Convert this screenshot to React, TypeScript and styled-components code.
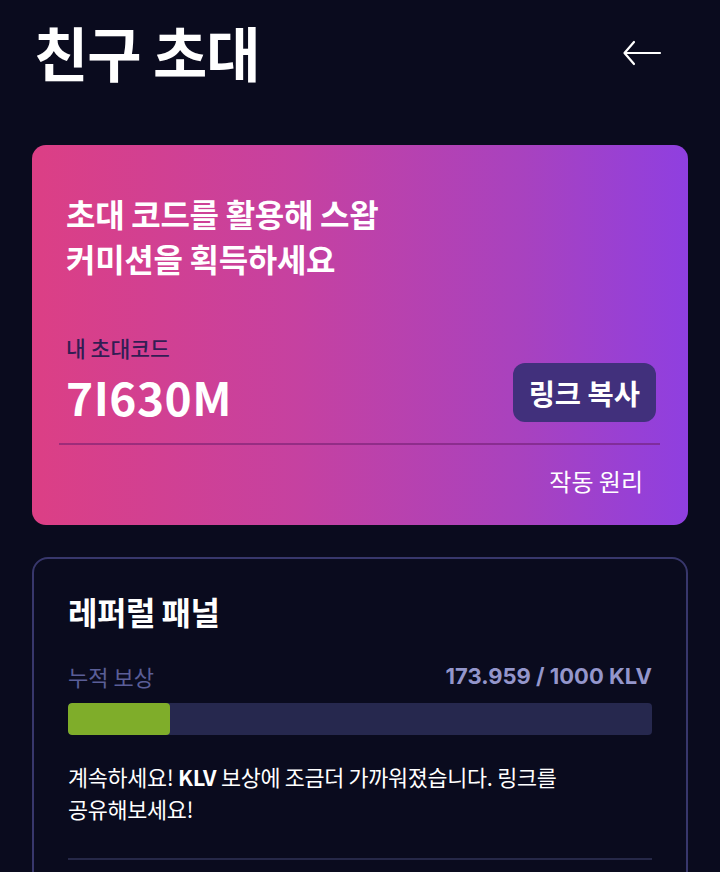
import React from "react";
import styled, { createGlobalStyle } from "styled-components";

const GlobalStyle = createGlobalStyle`
  html, body {
    margin: 0;
    padding: 0;
    background: #0a0b1e;
  }
  body {
    font-family: "Noto Sans CJK KR", "Noto Sans", sans-serif;
    color: #ffffff;
  }
  * { box-sizing: border-box; }
`;

const Page = styled.div`
  width: 720px;
  min-height: 872px;
  padding: 11px 32px 0;
  background: #0a0b1e;
  overflow: hidden;
`;

const Header = styled.header`
  display: flex;
  align-items: center;
  justify-content: space-between;
  height: 80px;
  padding-left: 2px;
  margin-bottom: 54px;
`;

const Title = styled.h1`
  margin: 0;
  font-size: 59px;
  font-weight: 700;
  letter-spacing: -1px;
  line-height: 1;
`;

const BackButton = styled.button`
  background: none;
  border: none;
  padding: 0;
  margin-right: 26px;
  margin-top: 4px;
  width: 40px;
  height: 30px;
  display: flex;
  align-items: center;
  justify-content: center;
  color: #ffffff;
  cursor: pointer;
`;

const InviteCard = styled.section`
  border-radius: 14px;
  background: linear-gradient(90deg, #dc3f85 0%, #c641a0 40%, #a842bf 75%, #8f3fe0 100%);
  padding: 46px 28px 28px 34px;
  margin-bottom: 32px;
`;

const Headline = styled.p`
  margin: 0 0 53px;
  font-size: 32px;
  font-weight: 700;
  line-height: 45px;
  letter-spacing: -0.3px;
`;

const CodeRow = styled.div`
  display: flex;
  align-items: flex-end;
  justify-content: space-between;
  padding-right: 4px;
  padding-bottom: 19px;
`;

const CodeBlock = styled.div`
  display: flex;
  flex-direction: column;
`;

const CodeLabel = styled.span`
  font-size: 21.5px;
  font-weight: 500;
  color: rgba(34, 26, 78, 0.92);
  line-height: 28px;
`;

const CodeValue = styled.span`
  font-size: 46px;
  font-weight: 700;
  line-height: 56px;
  margin-top: 6px;
  letter-spacing: 0.5px;
`;

const CopyButton = styled.button`
  background: #41307c;
  border: none;
  border-radius: 12px;
  height: 59px;
  padding: 0 16px;
  color: #ffffff;
  font-family: inherit;
  font-size: 28.5px;
  font-weight: 700;
  margin-bottom: 2px;
  cursor: pointer;
`;

const CardDivider = styled.hr`
  margin: 0 0 0 -7px;
  border: none;
  height: 2px;
  background: rgba(110, 30, 110, 0.55);
`;

const HowItWorks = styled.div`
  display: flex;
  justify-content: flex-end;
  padding: 20px 17px 0 0;
  font-size: 24px;
  line-height: 32px;
`;

const PanelCard = styled.section`
  border: 2px solid #38376c;
  border-radius: 16px;
  padding: 30px 34px 0 34px;
  min-height: 340px;
`;

const PanelTitle = styled.h2`
  margin: 0 0 29px;
  font-size: 32px;
  font-weight: 700;
  line-height: 44px;
  letter-spacing: -0.5px;
`;

const StatRow = styled.div`
  display: flex;
  justify-content: space-between;
  align-items: center;
  margin-bottom: 13px;
`;

const StatLabel = styled.span`
  font-size: 22px;
  color: #5a5e98;
  line-height: 28px;
`;

const StatValue = styled.span`
  font-family: "Inter", "Lato", sans-serif;
  font-size: 22px;
  font-weight: 700;
  color: #9496cb;
  letter-spacing: 0;
`;

const ProgressTrack = styled.div`
  height: 32px;
  border-radius: 4px;
  background: #26284e;
  overflow: hidden;
  margin-bottom: 26px;
`;

const ProgressFill = styled.div`
  height: 100%;
  background: #7fad2a;
  border-radius: 4px;
`;

const Message = styled.p`
  margin: 0 0 33px;
  font-size: 21.8px;
  line-height: 32px;
  letter-spacing: -0.3px;
  b { font-weight: 700; }
`;

const PanelDivider = styled.hr`
  margin: 0;
  border: none;
  height: 2px;
  background: #262848;
`;

export default function App() {
  const earned = 173.959;
  const goal = 1000;
  const pct = (earned / goal) * 100;
  return (
    <>
      <GlobalStyle />
      <Page>
        <Header>
          <Title>친구 초대</Title>
          <BackButton aria-label="back">
            <svg width="40" height="26" viewBox="0 0 40 26" fill="none">
              <path d="M38 13H3M12 2L2.5 13L12 24" stroke="#fff" strokeWidth="2.2" strokeLinecap="round" strokeLinejoin="round" />
            </svg>
          </BackButton>
        </Header>

        <InviteCard>
          <Headline>
            초대 코드를 활용해 스왑
            <br />
            커미션을 획득하세요
          </Headline>
          <CodeRow>
            <CodeBlock>
              <CodeLabel>내 초대코드</CodeLabel>
              <CodeValue>7I630M</CodeValue>
            </CodeBlock>
            <CopyButton>링크 복사</CopyButton>
          </CodeRow>
          <CardDivider />
          <HowItWorks>작동 원리</HowItWorks>
        </InviteCard>

        <PanelCard>
          <PanelTitle>레퍼럴 패널</PanelTitle>
          <StatRow>
            <StatLabel>누적 보상</StatLabel>
            <StatValue>173.959 / 1000 KLV</StatValue>
          </StatRow>
          <ProgressTrack>
            <ProgressFill style={{ width: `${pct}%` }} />
          </ProgressTrack>
          <Message>
            계속하세요! <b>KLV</b> 보상에 조금더 가까워졌습니다. 링크를
            <br />
            공유해보세요!
          </Message>
          <PanelDivider />
        </PanelCard>
      </Page>
    </>
  );
}
